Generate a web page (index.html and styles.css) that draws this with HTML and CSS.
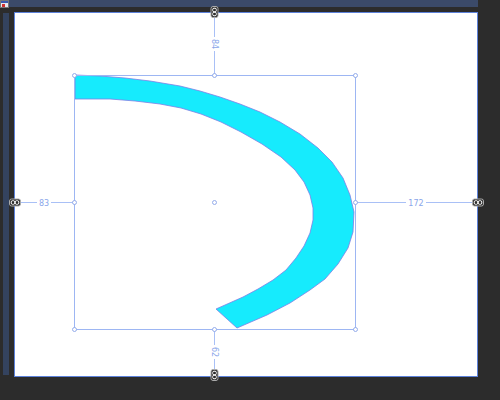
FILE: index.html
```html
<!DOCTYPE html>
<html>
<head>
<meta charset="utf-8">
<link rel="stylesheet" href="styles.css">
</head>
<body>
<div class="app">
  <div class="toprow">
    <div class="appicon">
      <svg width="9" height="8" viewBox="0 0 9 8">
        <rect x="0.5" y="0.5" width="8" height="7" fill="#e8e8ee" stroke="#777"/>
        <rect x="1" y="1" width="7" height="2" fill="#3a5ab0"/>
        <rect x="2" y="4" width="3" height="3" fill="#d03030"/>
      </svg>
    </div>
    <div class="tabbar"></div>
  </div>
  <div class="mainrow">
    <div class="sidebar"></div>
    <div class="canvas">
      <svg class="drawing" width="462" height="363" viewBox="15 13 462 363">
        <g class="dims" stroke="#a9c0f6" stroke-width="1" fill="none">
          <line x1="214.5" y1="13" x2="214.5" y2="37"/>
          <line x1="214.5" y1="51" x2="214.5" y2="75"/>
          <line x1="214.5" y1="329" x2="214.5" y2="345"/>
          <line x1="214.5" y1="359" x2="214.5" y2="375"/>
          <line x1="15" y1="202.5" x2="37" y2="202.5"/>
          <line x1="51" y1="202.5" x2="74" y2="202.5"/>
          <line x1="355" y1="202.5" x2="406" y2="202.5"/>
          <line x1="426" y1="202.5" x2="477" y2="202.5"/>
        </g>
        <path d="M75,75 L100,76 L125,78 L150,81 L180,86 L200,91 L220,97 L240,104 L260,112 L280,122 L300,134 L318,148 L332,162 L343,178 L350,195 L354,212 L353,232 L348,248 L338,264 L325,279 L310,290 L290,303 L267,315 L237,328 L216,309 L243,297 L258,289 L273,280 L286,270 L296,258 L304,246 L310,233 L313,220 L313,208 L310,195 L304,182 L295,170 L281,157 L262,144 L241,132 L221,122 L201,114 L181,108 L160,104 L135,101 L110,99 L75,99 Z" fill="#16ebfd" stroke="#7d7de6" stroke-width="0.8" stroke-linejoin="round"/>
        <rect x="74.5" y="75.5" width="281" height="254" fill="none" stroke="#9db6f3" stroke-width="1"/>
        <g class="handles" fill="#fff" stroke="#8aa4e8" stroke-width="0.9">
          <circle cx="74.5" cy="75.5" r="2"/>
          <circle cx="214.5" cy="75.5" r="2"/>
          <circle cx="355.5" cy="75.5" r="2"/>
          <circle cx="74.5" cy="202.5" r="2"/>
          <circle cx="214.5" cy="202.5" r="2"/>
          <circle cx="355.5" cy="202.5" r="2"/>
          <circle cx="74.5" cy="329.5" r="2"/>
          <circle cx="214.5" cy="329.5" r="2"/>
          <circle cx="355.5" cy="329.5" r="2"/>
        </g>
        <g class="labels">
          <text x="214.5" y="44" transform="rotate(90 214.5 44)">84</text>
          <text x="214.5" y="352" transform="rotate(90 214.5 352)">62</text>
          <text x="44" y="203">83</text>
          <text x="416" y="203">172</text>
        </g>
        <g class="links">
          <g transform="translate(214.5 12)">
            <rect x="-3.5" y="-5.5" width="7" height="11" rx="2" fill="#2a2a2a" stroke="#aaa"/>
            <rect x="-1.8" y="-3.8" width="3.6" height="3.6" rx="1.3" fill="none" stroke="#fff" stroke-width="1"/>
            <rect x="-1.8" y="0.2" width="3.6" height="3.6" rx="1.3" fill="none" stroke="#fff" stroke-width="1"/>
          </g>
          <g transform="translate(214.5 375)">
            <rect x="-3.5" y="-5.5" width="7" height="11" rx="2" fill="#2a2a2a" stroke="#aaa"/>
            <rect x="-1.8" y="-3.8" width="3.6" height="3.6" rx="1.3" fill="none" stroke="#fff" stroke-width="1"/>
            <rect x="-1.8" y="0.2" width="3.6" height="3.6" rx="1.3" fill="none" stroke="#fff" stroke-width="1"/>
          </g>
          <g transform="translate(15 202.5)">
            <rect x="-5.5" y="-3.5" width="11" height="7" rx="2" fill="#2a2a2a" stroke="#aaa"/>
            <rect x="-3.8" y="-1.8" width="3.6" height="3.6" rx="1.3" fill="none" stroke="#fff" stroke-width="1"/>
            <rect x="0.2" y="-1.8" width="3.6" height="3.6" rx="1.3" fill="none" stroke="#fff" stroke-width="1"/>
          </g>
          <g transform="translate(478 202.5)">
            <rect x="-5.5" y="-3.5" width="11" height="7" rx="2" fill="#2a2a2a" stroke="#aaa"/>
            <rect x="-3.8" y="-1.8" width="3.6" height="3.6" rx="1.3" fill="none" stroke="#fff" stroke-width="1"/>
            <rect x="0.2" y="-1.8" width="3.6" height="3.6" rx="1.3" fill="none" stroke="#fff" stroke-width="1"/>
          </g>
        </g>
      </svg>
    </div>
  </div>
</div>
</body>
</html>
```
FILE: styles.css
```css
html, body {
  margin: 0;
  padding: 0;
}
body {
  width: 500px;
  height: 400px;
  overflow: hidden;
  background: #2c2c2c;
  font-family: "DejaVu Sans", sans-serif;
}
.app {
  display: flex;
  flex-direction: column;
}
.toprow {
  display: flex;
  height: 7px;
}
.appicon {
  width: 9px;
  height: 8px;
  line-height: 0;
}
.tabbar {
  width: 469px;
  height: 7px;
  background: #3b4a69;
}
.mainrow {
  display: flex;
  margin-top: 5px;
}
.sidebar {
  margin-left: 3px;
  margin-top: 1px;
  width: 6px;
  height: 362px;
  background: #34435f;
}
.canvas {
  margin-left: 5px;
  width: 462px;
  height: 363px;
  background: #ffffff;
  border: 1px solid #5d82da;
  position: relative;
}
.drawing {
  display: block;
  overflow: visible;
}
.labels text {
  font-family: "DejaVu Sans", sans-serif;
  font-size: 8px;
  fill: #8aa6ea;
  text-anchor: middle;
  dominant-baseline: central;
}
```
